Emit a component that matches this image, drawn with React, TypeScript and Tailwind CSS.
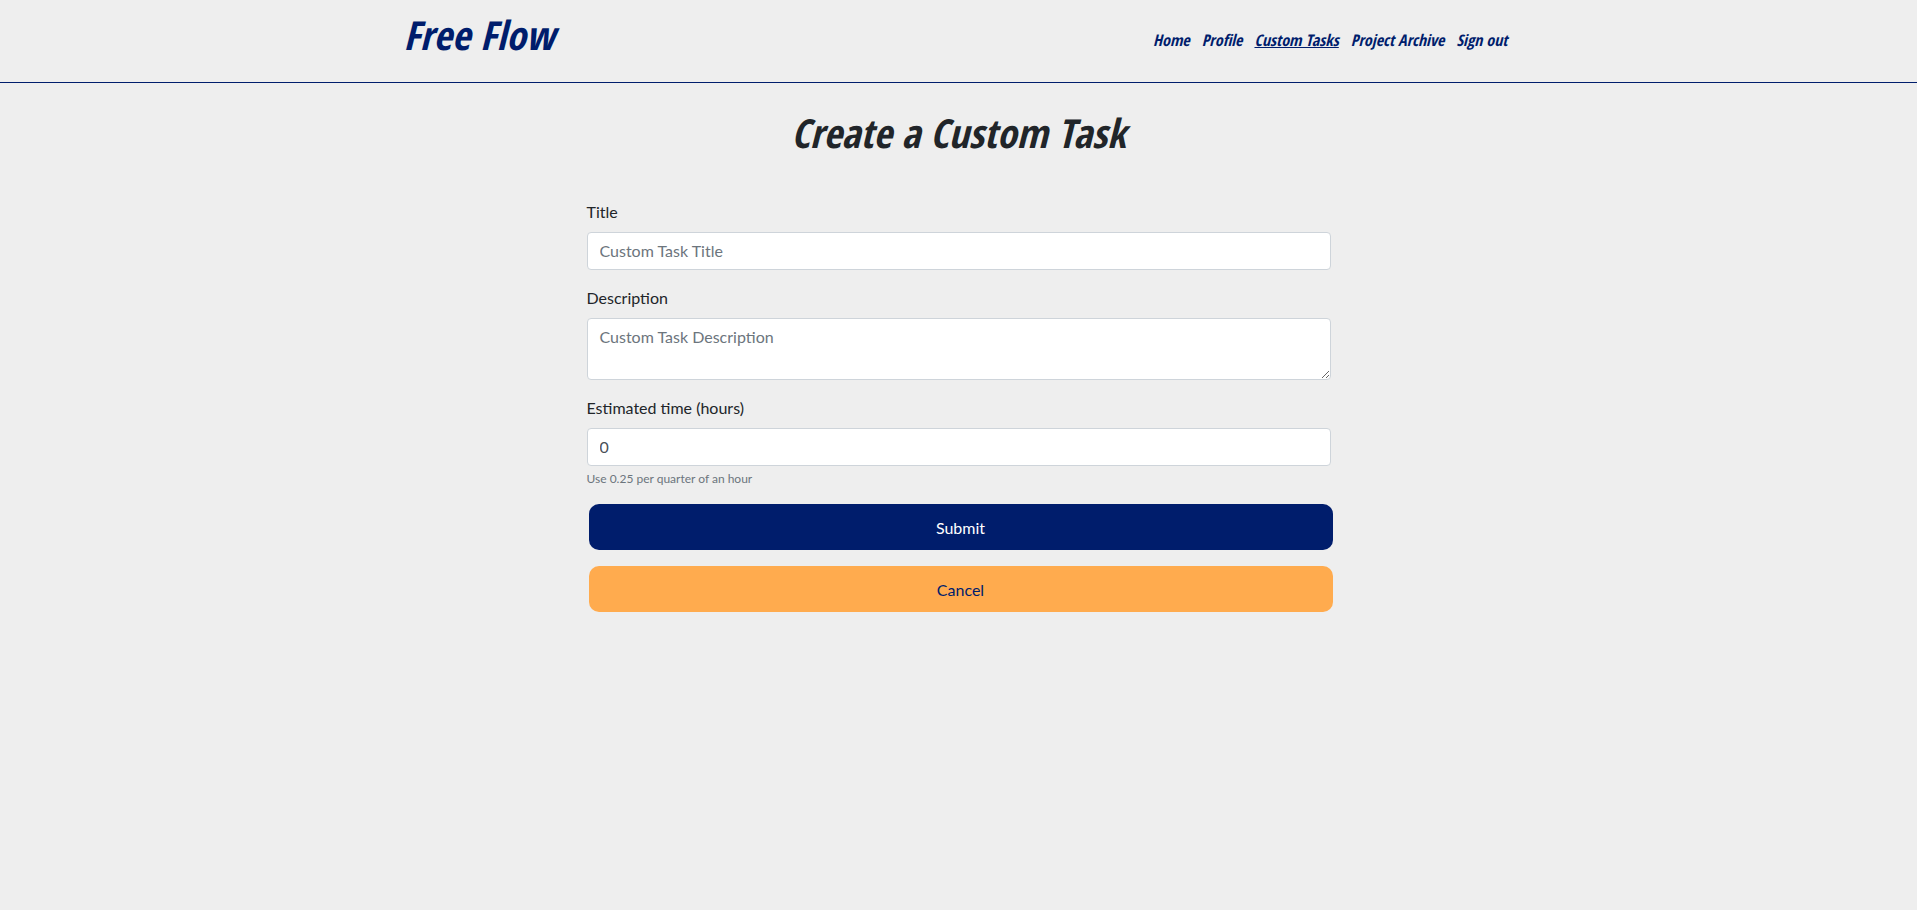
const links = ["Home", "Profile", "Custom Tasks", "Project Archive", "Sign out"];

const display = "font-['Open_Sans_Condensed','Liberation_Sans_Narrow',sans-serif] font-bold italic";
const label = "mb-2 block text-base leading-6";
const field =
  "block w-full rounded border border-[#ced4da] bg-white px-3 py-[6px] text-base leading-6 text-[#495057] placeholder:text-[#6c757d] placeholder:opacity-100";
const button = "mx-0.5 block h-[46px] w-full rounded-[10px] pt-0.5 text-base leading-6";

export default function App() {
  return (
    <div className="min-h-screen bg-[#eeeeee] font-['Lato',sans-serif] text-[#212529]">
      <header className="border-b border-[#001d6c] text-[#001d6c]">
        <div className="mx-auto flex h-[82px] max-w-[1110px] items-start justify-between pr-1.5">
          <a href="#home" className={`${display} pt-2.5 text-[40px] leading-[50px]`}>
            Free Flow
          </a>
          <nav className="flex gap-3 pt-7">
            {links.map((name) => (
              <a
                key={name}
                href="#"
                aria-current={name === "Custom Tasks" ? "page" : undefined}
                className={`${display} text-base leading-6 aria-[current=page]:underline`}
              >
                {name}
              </a>
            ))}
          </nav>
        </div>
      </header>
      <main className="mx-auto max-w-[744px]">
        <h1 className={`${display} pt-[25px] pb-[42px] text-center text-[40px] leading-[50px]`}>
          Create a Custom Task
        </h1>
        <form onSubmit={(event) => event.preventDefault()}>
          <div className="mb-4">
            <label htmlFor="title" className={label}>Title</label>
            <input id="title" type="text" placeholder="Custom Task Title" className={field} />
          </div>
          <div className="mb-4">
            <label htmlFor="description" className={label}>Description</label>
            <textarea
              id="description"
              rows={2}
              placeholder="Custom Task Description"
              className={field}
            />
          </div>
          <div className="mb-4">
            <label htmlFor="time" className={label}>Estimated time (hours)</label>
            <input
              id="time"
              type="number"
              step="0.25"
              min="0"
              defaultValue="0"
              aria-describedby="time-help"
              className={field}
            />
            <small id="time-help" className="mt-1 block text-xs leading-[18px] text-[#6c757d]">
              Use 0.25 per quarter of an hour
            </small>
          </div>
          <button type="submit" className={`${button} mb-4 bg-[#001d6c] text-white`}>Submit</button>
          <button type="button" className={`${button} bg-[#ffab4e] text-[#001d6c]`}>Cancel</button>
        </form>
      </main>
    </div>
  );
}
